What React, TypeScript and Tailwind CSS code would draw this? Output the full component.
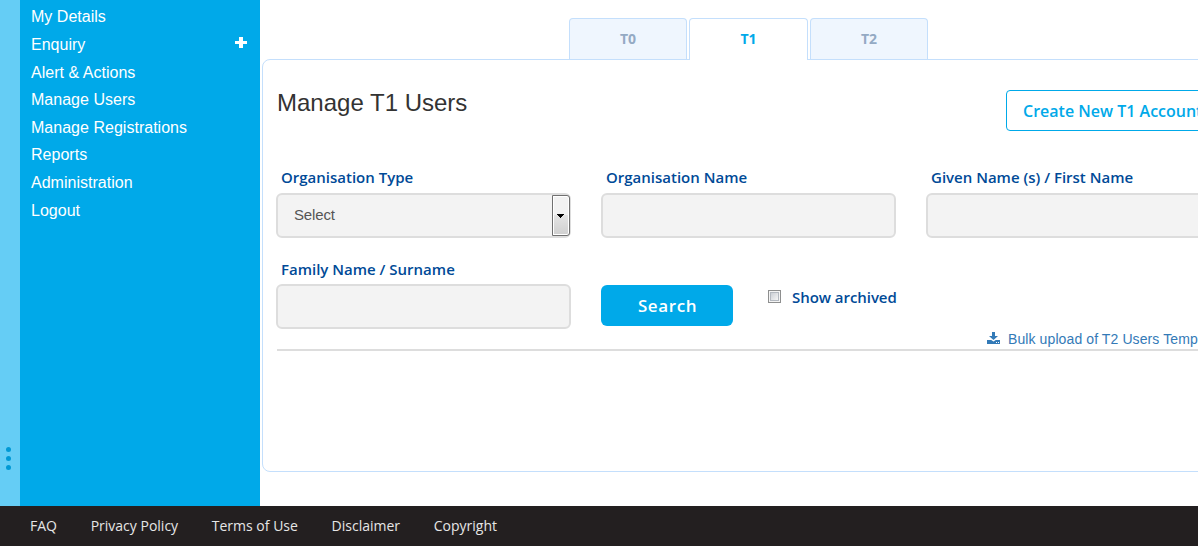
import React from 'react';

const menu = [
  { label: 'My Details' },
  { label: 'Enquiry', expandable: true },
  { label: 'Alert & Actions' },
  { label: 'Manage Users' },
  { label: 'Manage Registrations' },
  { label: 'Reports' },
  { label: 'Administration' },
  { label: 'Logout' },
];

const footerLinks = ['FAQ', 'Privacy Policy', 'Terms of Use', 'Disclaimer', 'Copyright'];

function PlusIcon() {
  return (
    <svg className="mb-1" width="12" height="11" viewBox="0 0 12 11" fill="#fff" shapeRendering="crispEdges">
      <path d="M4 0h4v4h4v3H8v4H4V7H0V4h4z" />
    </svg>
  );
}

function DownloadIcon() {
  return (
    <svg className="mb-0.5" width="13" height="12" viewBox="0 0 13 12" fill="#337ab7">
      <path d="M5 0h3v4h3L6.5 8 2 4h3z" />
      <path fillRule="evenodd" d="M0 8h4.2l2.3 1.6L8.8 8H13v4H0zM9 10v1h1v-1zM11 10v1h1v-1z" />
    </svg>
  );
}

function Label({ children }: { children: React.ReactNode }) {
  return (
    <div className="h-[31px] pl-[5px] text-[15px] leading-[31px] font-semibold whitespace-nowrap text-[#004a97]">
      {children}
    </div>
  );
}

function Field({ label, select }: { label: string; select?: boolean }) {
  return (
    <div className="w-[295px] shrink-0">
      <Label>{label}</Label>
      {select ? (
        <div className="flex h-[45px] items-stretch justify-between rounded-md border-2 border-[#ddd] bg-[#f3f3f3] font-['Liberation_Sans',sans-serif] text-[15px] text-[#555]">
          <span className="pl-4 leading-10 tracking-[-0.15px]">Select</span>
          <span className="-mr-px flex w-[18px] items-center justify-center rounded-r-[3px] border border-[#707070] bg-linear-to-b from-[#f2f2f2] from-50% via-[#e4e4e4] via-50% to-[#cfcfcf] pr-px shadow-[inset_0_0_0_1px_#fff]">
            <svg width="7" height="4" viewBox="0 0 7 4" shapeRendering="crispEdges">
              <path d="M0 0h7v1H6v1H5v1H4v1H3V3H2V2H1V1H0z" />
            </svg>
          </span>
        </div>
      ) : (
        <input
          aria-label={label}
          className="block h-[45px] w-full rounded-md border-2 border-[#ddd] bg-[#f3f3f3] px-4 outline-none"
        />
      )}
    </div>
  );
}

function Tab({ label, active }: { label: string; active?: boolean }) {
  return (
    <button
      className={
        active
          ? 'h-[42px] w-[119px] rounded-t border border-b-0 border-[#c4dffc] bg-white pb-px text-sm font-bold text-[#00a9e9]'
          : 'h-[41px] w-[118px] rounded-t border border-b-0 border-[#c4dffc] bg-[#eff6fe] text-sm font-bold text-[#94aac4]'
      }
    >
      {label}
    </button>
  );
}

export default function App() {
  return (
    <div className="flex h-[546px] w-[1198px] flex-col overflow-hidden bg-white font-['Open_Sans',sans-serif]">
      <div className="flex h-[506px]">
        <div className="flex w-5 shrink-0 flex-col items-start justify-end gap-1 bg-[#65cdf5] pb-9 pl-1.5">
          <i className="size-[5px] rounded-full bg-[#0099d5]" />
          <i className="size-[5px] rounded-full bg-[#0099d5]" />
          <i className="size-[5px] rounded-full bg-[#0099d5]" />
        </div>
        <nav className="w-60 shrink-0 bg-[#00a9e9] pt-[3.6px] pr-[13px] pl-[11px] font-['Liberation_Sans',sans-serif] text-base text-white">
          {menu.map((item) => (
            <div key={item.label} className="flex h-[27.6px] items-center justify-between">
              <span className="tracking-[0.02px]">{item.label}</span>
              {item.expandable && <PlusIcon />}
            </div>
          ))}
        </nav>
        <main className="flex w-[938px] shrink-0 flex-col overflow-hidden pl-0.5">
          <div className="z-10 flex h-[59px] shrink-0 items-start gap-0.5 pt-[18px] pl-[307px]">
            <Tab label="T0" />
            <Tab label="T1" active />
            <Tab label="T2" />
          </div>
          <section className="h-[413px] w-[990px] rounded-lg border border-[#c4dffc] pt-[30px] pl-[13px]">
            <div className="flex h-[72px] items-start justify-between pr-[29px]">
              <h1 className="pl-px font-['Liberation_Sans',sans-serif] text-2xl leading-[26px] text-[#333]">Manage T1 Users</h1>
              <button className="h-[41px] w-[216px] shrink-0 rounded border border-[#00a9e9] pl-4 text-left text-base font-semibold whitespace-nowrap text-[#00a9e9]">
                Create New T1 Account
              </button>
            </div>
            <div className="flex gap-[30px]">
              <Field label="Organisation Type" select />
              <Field label="Organisation Name" />
              <Field label="Given Name (s) / First Name" />
            </div>
            <div className="flex gap-[30px] pt-4">
              <div className="w-[295px] shrink-0">
                <Label>Family Name / Surname</Label>
                <input
                  aria-label="Family Name / Surname"
                  className="-mt-px block h-[45px] w-full rounded-md border-2 border-[#ddd] bg-[#f3f3f3] px-4 outline-none"
                />
              </div>
              <div className="flex items-start pt-[31px]">
                <button className="h-[41px] w-[132px] rounded-md bg-[#00a9e9] pt-px pl-px text-[17px] font-semibold tracking-[0.6px] text-white">
                  Search
                </button>
                <label className="flex items-start pt-[5px] pl-[35px] text-[15px] font-semibold text-[#004a97]">
                  <span className="mr-[11px] flex size-[13px] items-center justify-center border border-[#8e8f8f] bg-[#f4f4f4]">
                    <span className="size-[9px] border border-[#b4b9c0] bg-linear-to-br from-[#cbcfd5] to-[#f6f6f6]" />
                  </span>
                  <span className="leading-[14px] tracking-[-0.05px]">Show archived</span>
                </label>
              </div>
            </div>
            <div className="ml-px flex h-[22px] items-center gap-2 border-b-2 border-[#ddd] pl-[710px] font-['Liberation_Sans',sans-serif] text-sm whitespace-nowrap text-[#337ab7]">
              <DownloadIcon />
              <a className="tracking-[0.1px]">Bulk upload of T2 Users Template</a>
            </div>
          </section>
        </main>
      </div>
      <footer className="flex h-10 items-center gap-[33.7px] bg-[#231f20] pl-[30px] text-sm text-[#e6e6e6]">
        {footerLinks.map((link) => (
          <a key={link}>{link}</a>
        ))}
      </footer>
    </div>
  );
}
